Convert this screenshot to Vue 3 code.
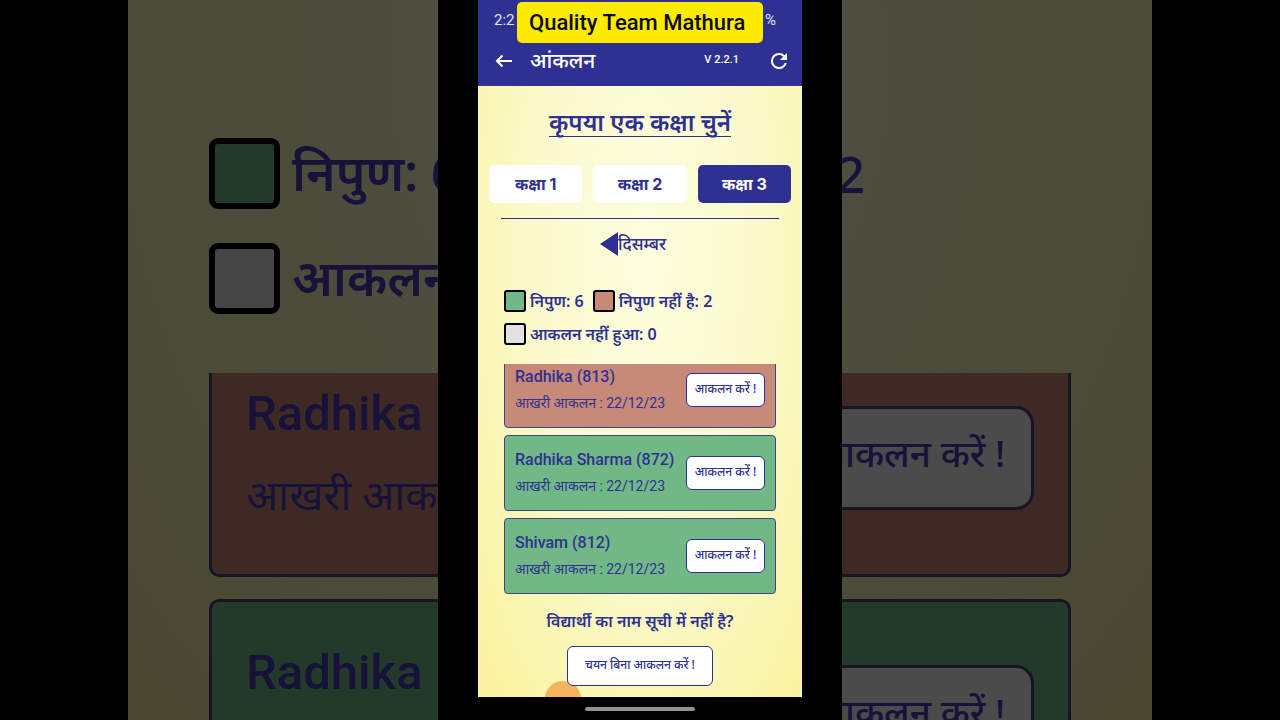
<script setup>
import { ref } from 'vue'

const grades = ['कक्षा 1', 'कक्षा 2', 'कक्षा 3']
const activeGrade = ref(2)

const legend = [
  { label: 'निपुण: 6', tone: 'green' },
  { label: 'निपुण नहीं है: 2', tone: 'red' },
  { label: 'आकलन नहीं हुआ: 0', tone: 'grey' }
]

const students = [
  { id: 813, name: 'Radhika', date: '22/12/23', tone: 'red' },
  { id: 872, name: 'Radhika Sharma', date: '22/12/23', tone: 'green' },
  { id: 812, name: 'Shivam', date: '22/12/23', tone: 'green' }
]
</script>

<template>
  <div class="stage">
    <div class="backdrop" aria-hidden="true">
      <div class="big-legend">
        <div class="big-row">
          <span class="big-swatch green"></span>
          <span class="big-label">निपुण: 6</span>
          <span class="big-count">2</span>
        </div>
        <div class="big-row">
          <span class="big-swatch grey"></span>
          <span class="big-label">आकलन</span>
        </div>
      </div>
      <div class="big-list">
        <div v-for="(s, i) in students.slice(0, 2)" :key="s.id" class="big-card" :class="s.tone">
          <div class="big-info">
            <div class="big-name">Radhika</div>
            <div v-if="i === 0" class="big-date">आखरी आकलन</div>
          </div>
          <div class="big-action">आकलन करें !</div>
        </div>
      </div>
    </div>

    <div class="column">
      <div class="phone">
        <header class="top">
          <div class="status">
            <span>2:2</span>
            <span>%</span>
            <div class="badge">Quality Team Mathura</div>
          </div>
          <div class="appbar">
            <button class="icon" type="button" aria-label="Back">
              <svg viewBox="0 0 18 14" width="18" height="14" fill="none" stroke="currentColor" stroke-width="2">
                <path d="M17 7H2M7.500 1.500 2 7l5.500 5.500" />
              </svg>
            </button>
            <h1>आंकलन</h1>
            <span class="version">V 2.2.1</span>
            <button class="icon" type="button" aria-label="Refresh">
              <svg viewBox="4 4 16 16" width="16" height="16" fill="currentColor">
                <path d="M17.650 6.350A7.960 7.960 0 0 0 12 4a8 8 0 1 0 7.730 10h-2.080A6 6 0 1 1 12 6c1.660 0 3.140.690 4.220 1.780L13 11h7V4z" />
              </svg>
            </button>
          </div>
        </header>

        <main class="body">
          <h2>कृपया एक कक्षा चुनें</h2>
          <div class="tabs">
            <button
              v-for="(g, i) in grades"
              :key="g"
              type="button"
              class="tab"
              :class="{ active: i === activeGrade }"
              @click="activeGrade = i"
            >{{ g }}</button>
          </div>
          <hr />
          <div class="month">
            <button class="prev" type="button" aria-label="Previous month">
              <svg viewBox="0 0 18 24" width="18" height="24" fill="currentColor">
                <path d="M0 12 18 0v24z" />
              </svg>
            </button>
            <span>दिसम्बर</span>
          </div>
          <div class="legend">
            <div v-for="l in legend" :key="l.label" class="legend-item">
              <span class="swatch" :class="l.tone"></span>
              <span>{{ l.label }}</span>
            </div>
          </div>
          <div class="list">
            <article v-for="s in students" :key="s.id" class="card" :class="s.tone">
              <div class="info">
                <h3>{{ s.name }} ({{ s.id }})</h3>
                <p>आखरी आकलन : {{ s.date }}</p>
              </div>
              <button class="assess" type="button">आकलन करें !</button>
            </article>
          </div>
          <p class="missing">विद्यार्थी का नाम सूची में नहीं है?</p>
          <button class="without" type="button">चयन बिना आकलन करें !</button>
          <span class="touch"></span>
        </main>
        <div class="nav"><span></span></div>
      </div>
    </div>
  </div>
</template>

<style>
body {
  background: #000;
}
</style>

<style scoped>
.stage {
  display: grid;
  grid-template-columns: 10% 1fr 404px 1fr 10%;
  grid-template-rows: 100vh;
  overflow: hidden;
  background: #000;
  color: #2e3192;
  font-family: "Noto Sans", "Open Sans", sans-serif;
}

h1, h2, h3, p {
  margin: 0;
}

button {
  padding: 0;
  border: 0;
  background: none;
  color: inherit;
  font: inherit;
  white-space: nowrap;
}

svg {
  display: block;
}

.backdrop {
  grid-area: 1 / 2 / 2 / 5;
  padding: 138px 81px 0;
  overflow: hidden;
  background: radial-gradient(ellipse at 50% 10%, #4f4f48 0%, #4c4c3b 50%, #4a4831 100%);
  color: #16123a;
}

.big-legend {
  display: grid;
  gap: 34px;
  height: 235px;
  align-content: start;
}

.big-row {
  display: flex;
  align-items: center;
  gap: 12px;
  height: 71px;
  font-size: 50px;
  font-weight: 600;
  line-height: 68px;
  white-space: nowrap;
}

.big-label {
  padding-bottom: 4px;
}

.big-swatch {
  box-sizing: border-box;
  width: 71px;
  height: 71px;
  border: 6px solid #000;
  border-radius: 9px;
}

.big-count {
  margin-left: auto;
  margin-right: 206px;
  font-weight: 500;
}

.backdrop .green {
  background: #23392a;
}

.backdrop .red {
  background: #3e2925;
}

.backdrop .grey {
  background: #464646;
}

.big-list {
  display: grid;
  gap: 22px;
}

.big-card {
  box-sizing: border-box;
  display: flex;
  justify-content: space-between;
  height: 240px;
  padding: 33px 34px;
  border: 3px solid #171425;
  border-radius: 10px;
}

.big-card:first-child {
  height: 204px;
  padding-top: 3px;
  border-top: 0;
  border-radius: 0 0 10px 10px;
}

.big-name {
  font-family: Roboto, sans-serif;
  font-size: 49px;
  font-weight: 500;
  line-height: 76px;
}

.big-date {
  font-size: 42px;
  line-height: 84px;
}

.big-action {
  box-sizing: border-box;
  height: 104px;
  margin-top: 30px;
  padding: 0 26px;
  border: 3px solid #171425;
  border-radius: 18px;
  background: #4b4b4b;
  font-size: 37px;
  font-weight: 500;
  line-height: 88px;
  white-space: nowrap;
}

.column {
  grid-area: 1 / 3 / 2 / 4;
  padding: 0 40px;
  background: #000;
}

.phone {
  display: flex;
  flex-direction: column;
  height: 100%;
}

.top {
  padding: 0 14px 0 16px;
  background: #2e3192;
  color: #fff;
}

.status {
  position: relative;
  display: flex;
  justify-content: space-between;
  height: 40px;
  padding-right: 12px;
  font: 15px/40px Roboto, sans-serif;
  color: #e4e4f6;
}

.badge {
  position: absolute;
  top: 2px;
  left: 23px;
  padding: 0 18px 0 12px;
  border-radius: 5px;
  background: #ffeb00;
  color: #0a0a0a;
  font: 500 22px/41px Roboto, sans-serif;
  white-space: nowrap;
}

.appbar {
  display: flex;
  align-items: center;
  height: 42px;
  padding-bottom: 4px;
}

.icon {
  padding: 0 1px;
}

h1 {
  flex: 1;
  margin-left: 16px;
  padding-bottom: 2px;
  font-size: 21px;
  font-weight: 500;
  line-height: 40px;
}

.version {
  margin-right: 31px;
  padding-bottom: 2px;
  font: 500 11px/40px Roboto, sans-serif;
}

.body {
  position: relative;
  flex: 1;
  display: flex;
  flex-direction: column;
  min-height: 0;
  overflow: hidden;
  background: radial-gradient(ellipse at 52% 28%, #fdfddd 0%, #fbface 45%, #f9f29b 100%);
}

h2 {
  align-self: center;
  margin-top: 22px;
  border-bottom: 1px solid #2e3192;
  font-size: 24px;
  font-weight: 600;
  line-height: 28px;
}

.tabs {
  display: grid;
  grid-template-columns: repeat(3, 1fr);
  gap: 11px;
  margin: 28px 11px 0;
}

.tab {
  height: 38px;
  border-radius: 5px;
  background: #fff;
  font-family: Inter, "Noto Sans", sans-serif;
  font-size: 16px;
  font-weight: 700;
}

.tab.active {
  background: #2e3192;
  color: #fff;
}

hr {
  box-sizing: border-box;
  width: 278px;
  margin: 15px auto 0;
  border: 0;
  border-top: 1px solid #2e3192;
}

.month {
  display: flex;
  align-items: center;
  justify-content: center;
  height: 28px;
  margin: 11px 14px 0 0;
  font-size: 17px;
  font-weight: 500;
  line-height: 28px;
}

.legend {
  display: flex;
  flex-wrap: wrap;
  gap: 11px 9px;
  margin: 32px 26px 0;
}

.legend-item {
  display: flex;
  align-items: center;
  gap: 4px;
  height: 22px;
  font-size: 16px;
  font-weight: 600;
  white-space: nowrap;
}

.swatch {
  box-sizing: border-box;
  width: 22px;
  height: 22px;
  border: 2px solid #000;
  border-radius: 3px;
}

.green {
  background: #71b886;
}

.red {
  background: #c78978;
}

.grey {
  background: #e2e2e2;
}

.list {
  display: flex;
  flex-direction: column;
  justify-content: flex-end;
  gap: 7px;
  height: 230px;
  margin: 19px 26px 0;
  overflow: hidden;
}

.card {
  box-sizing: border-box;
  flex: none;
  display: flex;
  align-items: center;
  justify-content: space-between;
  height: 76px;
  padding: 0 10px;
  border: 1px solid #3f4484;
  border-radius: 4px;
}

h3 {
  font-family: Roboto, sans-serif;
  font-size: 16px;
  font-weight: 500;
  line-height: 26px;
}

.info p {
  font-family: Roboto, "Noto Sans", sans-serif;
  font-size: 14px;
  line-height: 26px;
}

.assess {
  box-sizing: border-box;
  width: 79px;
  height: 34px;
  padding-bottom: 3px;
  border: 1px solid #2e3192;
  border-radius: 6px;
  background: #fff;
  font-size: 12px;
  font-weight: 500;
}

.missing {
  margin-top: 13px;
  font-size: 16px;
  font-weight: 600;
  line-height: 28px;
  text-align: center;
}

.without {
  position: relative;
  z-index: 1;
  box-sizing: border-box;
  align-self: center;
  width: 146px;
  height: 40px;
  margin-top: 11px;
  padding-bottom: 3px;
  border: 1px solid #2e3192;
  border-radius: 6px;
  background: #fff;
  font-size: 12px;
  font-weight: 500;
}

.touch {
  position: absolute;
  bottom: -20px;
  left: 67px;
  width: 36px;
  height: 36px;
  border-radius: 50%;
  background: #f6b25c;
}

.nav {
  display: grid;
  place-items: center;
  height: 23px;
}

.nav span {
  width: 110px;
  height: 4px;
  border-radius: 2px;
  background: #919191;
}
</style>
